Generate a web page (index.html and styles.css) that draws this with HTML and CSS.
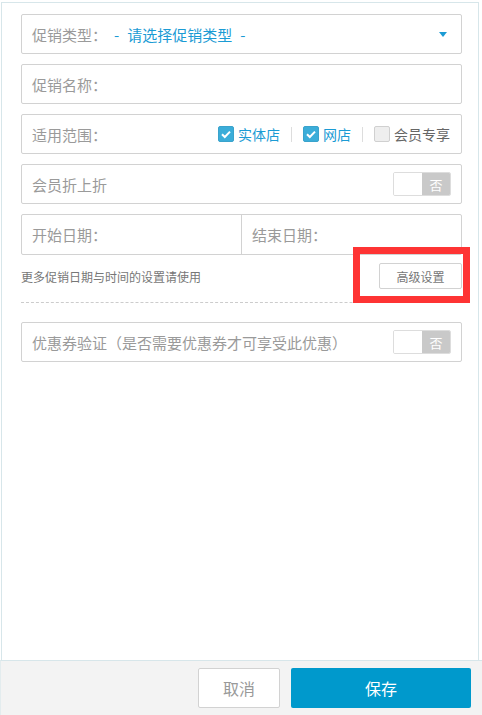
FILE: index.html
```html
<!DOCTYPE html>
<html lang="zh-CN">
<head>
<meta charset="utf-8">
<link rel="stylesheet" href="styles.css">
</head>
<body>
<div class="page">
  <div class="panel">
    <div class="field select">
      <span class="label">促销类型：</span>
      <span class="value"><span class="dash">-</span>请选择促销类型<span class="dash">-</span></span>
      <span class="caret"></span>
    </div>
    <div class="field">
      <span class="label">促销名称：</span>
    </div>
    <div class="field">
      <span class="label">适用范围：</span>
      <div class="checks">
        <span class="check on"><span class="box"><svg viewBox="0 0 16 16" width="16" height="16"><path d="M4 8.2 L6.8 11 L12 5.6" fill="none" stroke="#fff" stroke-width="2"/></svg></span>实体店</span>
        <span class="sep"></span>
        <span class="check on"><span class="box"><svg viewBox="0 0 16 16" width="16" height="16"><path d="M4 8.2 L6.8 11 L12 5.6" fill="none" stroke="#fff" stroke-width="2"/></svg></span>网店</span>
        <span class="sep"></span>
        <span class="check"><span class="box"></span>会员专享</span>
      </div>
    </div>
    <div class="field">
      <span class="label">会员折上折</span>
      <span class="toggle"><span class="knob"></span><span class="off">否</span></span>
    </div>
    <div class="daterow">
      <div class="date"><span class="label">开始日期：</span></div>
      <div class="date"><span class="label">结束日期：</span></div>
    </div>
    <div class="hint">
      <span class="hinttext">更多促销日期与时间的设置请使用</span>
      <span class="advbtn">高级设置</span>
      <span class="highlight"></span>
    </div>
    <div class="dashed"></div>
    <div class="field">
      <span class="label">优惠券验证（是否需要优惠券才可享受此优惠）</span>
      <span class="toggle"><span class="knob"></span><span class="off">否</span></span>
    </div>
  </div>
  <div class="footer">
    <span class="btn cancel">取消</span>
    <span class="btn save">保存</span>
  </div>
</div>
</body>
</html>
```
FILE: styles.css
```css
* { box-sizing: border-box; }
html, body { margin: 0; padding: 0; background: #fff; }
body {
  font-family: "Noto Sans CJK SC", "Noto Sans", sans-serif;
  width: 482px;
  height: 715px;
  overflow: hidden;
}
.page {
  display: flex;
  flex-direction: column;
  height: 715px;
}
.panel {
  position: relative;
  margin: 2px 3px 0 1px;
  border: 1px solid #d7e6ea;
  border-bottom: none;
  height: 658px;
  padding: 11px 16px 0 19px;
  display: flex;
  flex-direction: column;
}
.field {
  height: 40px;
  border: 1px solid #d2d2d2;
  border-radius: 2px;
  display: flex;
  align-items: center;
  padding: 0 10px 0 10px;
  margin-bottom: 10px;
  font-size: 15px;
  color: #999;
}
.label { color: #9a9a9a; font-size: 15px; white-space: nowrap; }
.select .value {
  color: #1b9bd4;
  margin-left: 7px;
  flex: 1;
  display: flex;
  align-items: center;
}
.dash { margin: 0 8px 0 0; }
.value .dash:last-child { margin: 0 0 0 8px; }
.caret {
  width: 0; height: 0;
  border-left: 4px solid transparent;
  border-right: 4px solid transparent;
  border-top: 5px solid #1b9bd4;
  margin-right: 4px;
}
.checks {
  margin-left: auto;
  display: flex;
  align-items: center;
  margin-right: 1px;
}
.check {
  display: flex;
  align-items: center;
  color: #666;
  font-size: 14px;
}
.check.on { color: #1b9bd4; }
.box {
  width: 16px; height: 16px;
  border-radius: 2px;
  margin-right: 4px;
  background: #eee;
  border: 1px solid #d0d0d0;
  display: flex;
}
.check.on .box { background: #3badd9; border-color: #3aa3cc; }
.box svg { margin: -1px; }
.sep {
  width: 1px; height: 15px;
  background: #ddd;
  margin: 0 11px;
}
.toggle {
  margin-left: auto;
  width: 58px; height: 24px;
  border: 1px solid #ddd;
  border-radius: 2px;
  display: flex;
  overflow: hidden;
}
.knob { flex: 1; background: #fff; }
.off {
  width: 28px;
  background: #c9c9c9;
  color: #fff;
  font-size: 13px;
  display: flex;
  align-items: center;
  justify-content: center;
}
.daterow {
  display: flex;
  height: 41px;
  border: 1px solid #d2d2d2;
  border-radius: 2px;
}
.date {
  flex: 1;
  display: flex;
  align-items: center;
  padding-left: 10px;
}
.date + .date { border-left: 1px solid #d2d2d2; }
.hint {
  position: relative;
  display: flex;
  align-items: center;
  justify-content: space-between;
  margin-top: 8px;
  height: 26px;
}
.hinttext { font-size: 12px; color: #777; }
.advbtn {
  width: 83px; height: 26px;
  border: 1px solid #d2d2d2;
  border-radius: 2px;
  font-size: 12px;
  color: #777;
  display: flex;
  align-items: center;
  justify-content: center;
}
.highlight {
  position: absolute;
  left: 332px;
  top: -16px;
  width: 117px;
  height: 56px;
  border: 7px solid #fe3434;
}
.dashed {
  margin-top: 13px;
  border-top: 1px dashed #ccc;
  margin-bottom: 19px;
}
.footer {
  flex: 1;
  background: #f3f3f3;
  border-top: 1px solid #d7e6ea;
  border-left: 1px solid #e3ecee;
  display: flex;
  align-items: center;
  justify-content: flex-end;
  padding: 0 11px 0 0;
  gap: 11px;
}
.btn {
  height: 40px;
  display: flex;
  align-items: center;
  justify-content: center;
  font-size: 16px;
  border-radius: 2px;
}
.cancel {
  width: 82px;
  background: #fff;
  border: 1px solid #d2d2d2;
  color: #999;
}
.save {
  width: 180px;
  background: #0099cc;
  color: #fff;
}
```
